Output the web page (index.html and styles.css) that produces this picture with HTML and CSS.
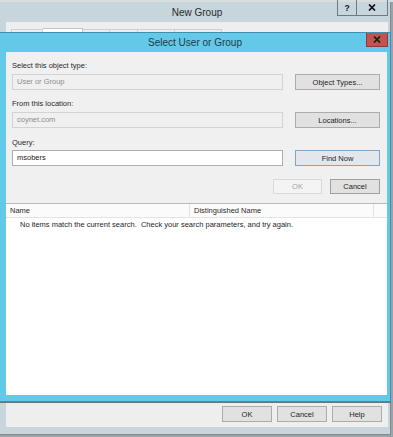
FILE: index.html
```html
<!DOCTYPE html>
<html lang="en">
<head>
<meta charset="utf-8">
<title>Select User or Group</title>
<link rel="stylesheet" href="styles.css">
</head>
<body>

<div class="screen">
    <div class="owner">
        <div class="owner-title">
            <span></span>
            <span class="caption">New Group</span>
            <div class="caption-btns">
                <span class="cbtn cbtn-help">?</span>
                <span class="cbtn cbtn-close">
                    <svg width="8" height="7" viewBox="0 0 8 7"><path d="M1 0.5 L7 6.5 M7 0.5 L1 6.5" stroke="#111" stroke-width="1.7"/></svg>
                </span>
            </div>
        </div>
        <div class="owner-client">
            <div class="tabs">
                <span class="tab" style="width:32px"></span>
                <span class="tab tab-on" style="width:40px"></span>
                <span class="tab" style="width:27px"></span>
                <span class="tab" style="width:28px"></span>
                <span class="tab" style="width:37px"></span>
                <span class="tab" style="width:47px"></span>
            </div>
            <div class="owner-footer">
                <button class="btn btn-foot">OK</button>
                <button class="btn btn-foot">Cancel</button>
                <button class="btn btn-foot">Help</button>
            </div>
        </div>
    </div>

    <div class="dialog">
        <div class="dlg-title">
            <span></span>
            <span class="caption">Select User or Group</span>
            <span class="dlg-close">
                <svg width="8" height="7" viewBox="0 0 8 7"><path d="M1 0.5 L7 6.5 M7 0.5 L1 6.5" stroke="#1a1a1a" stroke-width="1.7"/></svg>
            </span>
        </div>
        <div class="dlg-client">
            <div class="form">
                <div class="lbl">Select this object type:</div>
                <div class="line">
                    <div class="box box-off">User or Group</div>
                    <button class="btn">Object Types...</button>
                </div>
                <div class="lbl lbl-2">From this location:</div>
                <div class="line">
                    <div class="box box-off">coynet.com</div>
                    <button class="btn">Locations...</button>
                </div>
                <div class="lbl lbl-3">Query:</div>
                <div class="line">
                    <div class="box">msobers</div>
                    <button class="btn btn-default">Find Now</button>
                </div>
                <div class="actions">
                    <button class="btn btn-off btn-ok">OK</button>
                    <button class="btn btn-cancel">Cancel</button>
                </div>
            </div>
            <div class="listview">
                <div class="lv-head">
                    <span class="col col-name">Name</span>
                    <span class="col col-dn">Distinguished Name</span>
                    <span class="col col-rest"></span>
                </div>
                <div class="lv-empty">No items match the current search.&nbsp; Check your search parameters, and try again.</div>
            </div>
        </div>
    </div>
</div>

</body>
</html>
```

FILE: styles.css
```css
* {
    box-sizing: border-box;
}
body {
    margin: 0;
    background-color: #9aa3a7;
    font-family: "Liberation Sans", Arial, sans-serif;
    font-size: 7.5px;
    color: #1e1e1e;
}
.screen {
    position: relative;
    width: 393px;
    height: 437px;
    overflow: hidden;
    background: linear-gradient(#d8dde0 0, #d8dde0 2px, #9aa3a7 2px);
}
button {
    font-family: inherit;
    font-size: 7.5px;
    color: #1e1e1e;
    margin: 0;
    padding: 0;
}

/* window behind */
.owner {
    position: relative;
    top: 2px;
    width: 391px;
    height: 433px;
    background-color: #c6d6dc;
    border-right: 1px solid #7f8d93;
    border-bottom: 1px solid #7f8d93;
    display: flex;
    flex-direction: column;
    padding: 0 2px 7px 6px;
}
.owner-title {
    height: 20px;
    display: grid;
    grid-template-columns: 1fr auto 1fr;
    align-items: start;
}
.owner-title .caption {
    padding-top: 1px;
}
.caption {
    font-size: 10px;
    color: #2a2a2a;
    line-height: 20px;
}
.caption-btns {
    justify-self: end;
    display: flex;
    margin-top: -2px;
}
.cbtn {
    height: 16px;
    border: 1px solid #6f7a7f;
    border-top: none;
    display: flex;
    align-items: center;
    justify-content: center;
    font-weight: bold;
    font-size: 8.5px;
    color: #111;
}
.cbtn-help {
    width: 19px;
    border-right: none;
}
.cbtn-close {
    width: 32px;
}
.owner-client {
    flex: 1;
    background-color: #eeeeee;
    display: flex;
    flex-direction: column;
    justify-content: space-between;
}
.tabs {
    display: flex;
    padding: 6px 0 0 5px;
    align-items: flex-end;
}
.tab {
    height: 10px;
    border: 1px solid #d0d0d0;
    border-left: none;
    background-color: #eeeeee;
}
.tab:first-child {
    border-left: 1px solid #d0d0d0;
}
.tab-on {
    height: 11px;
    background-color: #ffffff;
    border-color: #c4c4c4;
}
.owner-footer {
    display: flex;
    justify-content: flex-end;
    gap: 5px;
    padding: 0 6px 5px 0;
}
.btn-foot {
    width: 50px;
}

/* the dialog on top */
.dialog {
    position: absolute;
    left: 0;
    top: 32px;
    width: 391px;
    height: 370px;
    background-color: #64c8e8;
    border: 1px solid #3f90ae;
    border-left: none;
    box-shadow: 0 1px 0 #6d7478;
    display: flex;
    flex-direction: column;
}
.dlg-title {
    height: 19px;
    display: grid;
    grid-template-columns: 1fr auto 1fr;
    align-items: start;
}
.dlg-title .caption {
    line-height: 19px;
    color: #1f3a47;
}
.dlg-close {
    justify-self: end;
    margin-right: 2px;
    width: 22px;
    height: 14px;
    background-color: #c75050;
    border: 1px solid #8f3a3a;
    border-top: none;
    display: flex;
    align-items: center;
    justify-content: center;
}
.dlg-client {
    flex: 1;
    margin: 0 3px 6px 6px;
    background-color: #f0f0f0;
    display: flex;
    flex-direction: column;
}
.form {
    padding: 8px 7px 0 6px;
}
.lbl {
    line-height: 12px;
    margin-bottom: 2px;
    color: #2a2a2a;
}
.lbl-2 {
    margin-top: 8px;
}
.lbl-3 {
    margin-top: 9px;
    margin-bottom: 1px;
}
.line {
    display: grid;
    grid-template-columns: 1fr 85px;
    column-gap: 12px;
    height: 16px;
}
.box {
    border: 1px solid #abadb3;
    background-color: #ffffff;
    line-height: 14px;
    padding-left: 4px;
    color: #1a1a1a;
}
.box-off {
    border-color: #d3d3d3;
    background-color: #f0f0f0;
    color: #8d8d8d;
}
.btn {
    height: 16px;
    border: 1px solid #acacac;
    background-color: #e1e1e1;
    text-align: center;
}
.btn-default {
    border-color: #7ea6c8;
    background-color: #e3e6ea;
}
.actions {
    display: flex;
    justify-content: flex-end;
    gap: 8px;
    margin-top: 13px;
}
.actions .btn {
    height: 15px;
}
.btn-ok {
    width: 49px;
}
.btn-cancel {
    width: 50px;
    border-color: #a0a0a0;
}
.btn-off {
    background-color: #f4f4f4;
    border-color: #d9d9d9;
    color: #a2a2a2;
}

/* results list */
.listview {
    flex: 1;
    margin-top: 9px;
    background-color: #ffffff;
    border-top: 1px solid #b9b9b9;
}
.lv-head {
    display: flex;
    height: 14px;
    border-bottom: 1px solid #e3e3e3;
    background-color: #fbfbfb;
}
.col {
    line-height: 13px;
    padding-left: 4px;
    color: #2a2a2a;
}
.col-name {
    width: 184px;
    border-right: 1px solid #e3e3e3;
}
.col-dn {
    width: 184px;
    border-right: 1px solid #e3e3e3;
}
.col-rest {
    flex: 1;
}
.lv-empty {
    padding: 1px 0 0 14px;
    line-height: 12px;
    color: #1e1e1e;
}
```
